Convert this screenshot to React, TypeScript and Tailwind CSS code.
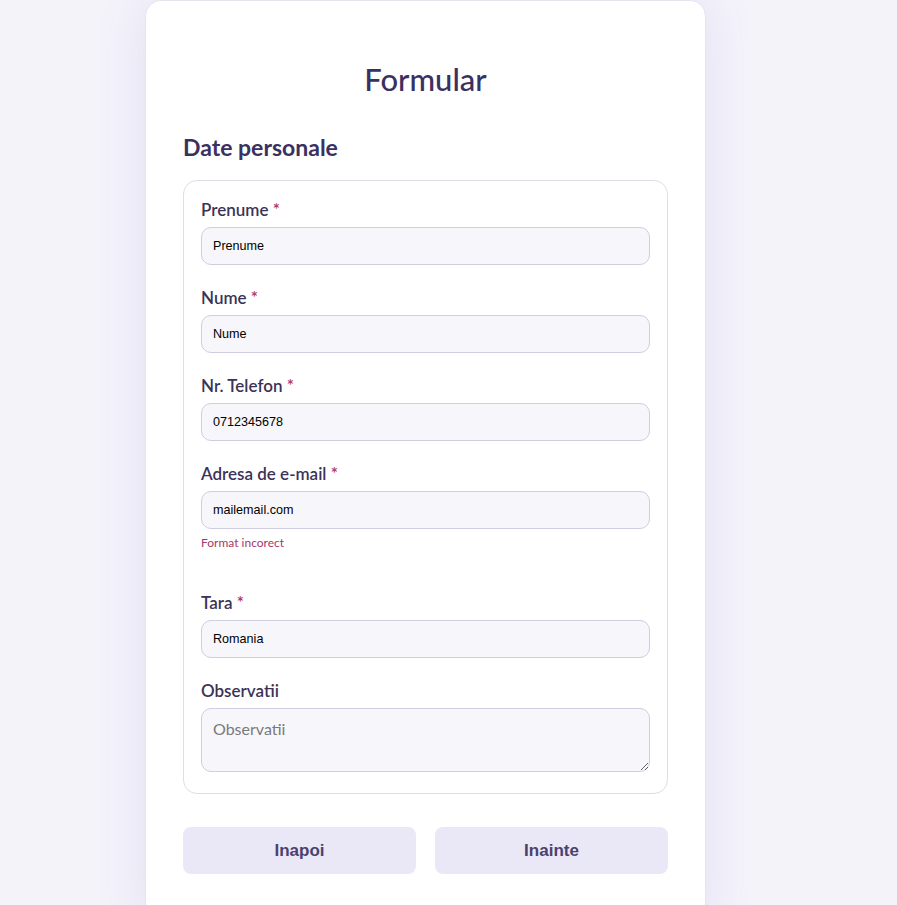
import React from "react";

function Label({ text, required }: { text: string; required?: boolean }) {
  return (
    <label className="block font-['Lato',sans-serif] text-[17px] leading-[22px] font-semibold text-[#3b3357] mb-[6px]">
      {text}
      {required && <span className="text-[#b33a6c]"> *</span>}
    </label>
  );
}

function Field({ label, value, error }: { label: string; value: string; error?: string }) {
  return (
    <div className={error ? "mb-[41px]" : "mb-[22px]"}>
      <Label text={label} required />
      <input
        defaultValue={value}
        className="block w-full h-[38px] rounded-[10px] border border-[#cfcde0] bg-[#f7f6fb] px-[11px] font-['Liberation_Sans',Arial,sans-serif] text-[12.6px] text-black outline-none"
      />
      {error && (
        <div className="mt-[6px] h-[16px] font-['Lato',sans-serif] text-[12px] leading-[16px] text-[#a8366b]">
          {error}
        </div>
      )}
    </div>
  );
}

function NavButton({ children }: { children: React.ReactNode }) {
  return (
    <button className="h-[47px] rounded-[8px] bg-[#eae8f6] font-['Liberation_Sans',Arial,sans-serif] text-[17px] font-bold text-[#4a4170]">
      {children}
    </button>
  );
}

export default function App() {
  return (
    <div className="min-h-[905px] bg-[#f4f3fa] pl-[145px] overflow-hidden">
      <div className="w-[561px] min-h-[930px] bg-white rounded-[16px] border border-[#e6e5ef] shadow-[0_0_50px_rgba(110,95,200,0.13)] px-[37px] pt-[60px]">
        <h1 className="text-center font-['Lato',sans-serif] text-[31px] leading-[36px] font-medium text-[#3a3160]">
          Formular
        </h1>
        <h2 className="mt-[35px] font-['Lato',sans-serif] text-[23px] leading-[30px] font-bold text-[#3a3160]">
          Date personale
        </h2>
        <div className="mt-[18px] rounded-[14px] border border-[#dedde8] px-[17px] pt-[18px] pb-[21px]">
          <Field label="Prenume" value="Prenume" />
          <Field label="Nume" value="Nume" />
          <Field label="Nr. Telefon" value="0712345678" />
          <Field label="Adresa de e-mail" value="mailemail.com" error="Format incorect" />
          <Field label="Tara" value="Romania" />
          <div>
            <Label text="Observatii" />
            <textarea
              placeholder="Observatii"
              className="block w-full h-[64px] rounded-[10px] border border-[#cfcde0] bg-[#f7f6fb] px-[11px] py-[10px] font-['Lato',sans-serif] text-[16px] leading-[20px] text-black placeholder:text-[#7a7a7a] outline-none"
            />
          </div>
        </div>
        <div className="mt-[33px] grid grid-cols-2 gap-[19px]">
          <NavButton>Inapoi</NavButton>
          <NavButton>Inainte</NavButton>
        </div>
      </div>
    </div>
  );
}
